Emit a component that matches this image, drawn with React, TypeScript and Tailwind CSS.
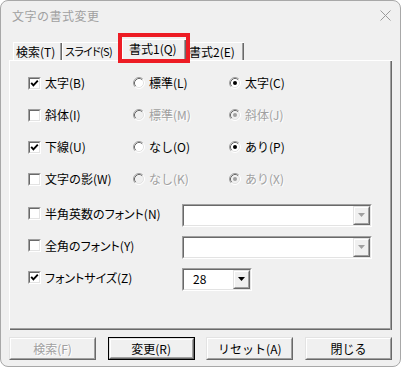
import React from "react";

const FONT = { fontFamily: '"Noto Sans CJK JP", "Noto Sans", sans-serif' };

function Raised({ children, className = "" }: { children?: React.ReactNode; className?: string }) {
  return (
    <div className={`border border-t-[#e3e3e3] border-l-[#e3e3e3] border-r-[#696969] border-b-[#696969] ${className}`}>
      <div className="w-full h-full border border-t-white border-l-white border-r-[#a0a0a0] border-b-[#a0a0a0] flex items-center justify-center">
        {children}
      </div>
    </div>
  );
}

function Sunken({ children, className = "" }: { children?: React.ReactNode; className?: string }) {
  return (
    <div className={`border border-t-[#a0a0a0] border-l-[#a0a0a0] border-r-white border-b-white ${className}`}>
      <div className="w-full h-full border border-t-[#696969] border-l-[#696969] border-r-[#e3e3e3] border-b-[#e3e3e3] bg-white flex items-center">
        {children}
      </div>
    </div>
  );
}

function Check({ checked }: { checked?: boolean }) {
  return (
    <Sunken className="w-[13px] h-[13px] shrink-0">
      {checked && (
        <svg width="9" height="9" viewBox="0 0 9 9" className="block">
          <polyline points="1.2,3.8 3.4,6.3 7.8,1.6" fill="none" stroke="#000" strokeWidth="1.9" />
        </svg>
      )}
    </Sunken>
  );
}

function Radio({ checked, disabled }: { checked?: boolean; disabled?: boolean }) {
  return (
    <svg width="12" height="12" viewBox="0 0 12 12" className="shrink-0 block">
      <circle cx="6" cy="6" r="5" fill={disabled ? "#f0f0f0" : "#fff"} />
      <path d="M2.11 9.89 A5.5 5.5 0 0 1 9.89 2.11" fill="none" stroke="#a0a0a0" strokeWidth="1" />
      <path d="M2.82 9.18 A4.5 4.5 0 0 1 9.18 2.82" fill="none" stroke="#696969" strokeWidth="1" />
      <path d="M9.89 2.11 A5.5 5.5 0 0 1 2.11 9.89" fill="none" stroke="#fff" strokeWidth="1" />
      <path d="M9.18 2.82 A4.5 4.5 0 0 1 2.82 9.18" fill="none" stroke="#e3e3e3" strokeWidth="1" />
      {checked && <circle cx="6" cy="6" r="2" fill={disabled ? "#a0a0a0" : "#000"} />}
    </svg>
  );
}

const dis = "text-[#a0a0a0] [text-shadow:1px_1px_0_#fff]";

function OptRow({
  label,
  checked,
  r1,
  r2,
  disabled,
}: {
  label: string;
  checked?: boolean;
  r1: string;
  r2: string;
  disabled?: boolean;
}) {
  return (
    <div className="h-[32px] flex items-center whitespace-nowrap">
      <div className="w-[105px] flex items-center">
        <Check checked={checked} />
        <span className="ml-[4px]">{label}</span>
      </div>
      <div className="w-[96px] flex items-center">
        <Radio disabled={disabled} />
        <span className={`ml-[4px] ${disabled ? dis : ""}`}>{r1}</span>
      </div>
      <div className="flex items-center">
        <Radio checked disabled={disabled} />
        <span className={`ml-[4px] ${disabled ? dis : ""}`}>{r2}</span>
      </div>
    </div>
  );
}

function Combo({ width, value, active }: { width: string; value?: string; active?: boolean }) {
  return (
    <Sunken className={`${width} h-[23px]`}>
      <span className="flex-1 pl-[9px] text-[12px]">{value}</span>
      <Raised className="w-[17px] h-[19px] bg-[#f0f0f0]">
        <svg width="7" height="4" viewBox="0 0 7 4" className="block">
          <polygon points="0,0 7,0 3.5,4" fill={active ? "#000" : "#a0a0a0"} />
        </svg>
      </Raised>
    </Sunken>
  );
}

function ComboRow({ label, value, active, checked, width }: { label: string; value?: string; active?: boolean; checked?: boolean; width: string }) {
  return (
    <div className="h-[32px] flex items-center whitespace-nowrap">
      <div className="w-[154px] flex items-center pb-[3px]">
        <Check checked={checked} />
        <span className="ml-[4px] [font-feature-settings:'palt']">{label}</span>
      </div>
      <Combo width={width} value={value} active={active} />
    </div>
  );
}

function Tab({ label, width, selected, tight }: { label: string; width: string; selected?: boolean; tight?: boolean }) {
  if (selected) {
    return (
      <div
        className={`${width} h-[22px] mb-[-1px] relative z-10 bg-[#f0f0f0] border-t border-l border-white flex`}
      >
        <div className="flex-1 pl-[6px] pt-[1px] leading-[16px] whitespace-nowrap">{label}</div>
        <div className="w-[1px] bg-[#a0a0a0]" />
        <div className="w-[1px] bg-[#696969]" />
      </div>
    );
  }
  return (
    <div className={`${width} h-[18px] border-t border-l border-white flex`}>
      <div
        className={`flex-1 min-w-0 pl-[2px] leading-[17px] whitespace-nowrap [font-feature-settings:'palt'] ${
          tight ? "text-[11px] tracking-[-0.7px]" : ""
        }`}
      >
        {label}
      </div>
      <div className="w-[1px] bg-[#a0a0a0]" />
      <div className="w-[1px] bg-[#696969]" />
    </div>
  );
}

function Btn({ label, def, disabled }: { label: string; def?: boolean; disabled?: boolean }) {
  const inner = (
    <Raised className="w-full h-full bg-[#f0f0f0]">
      <span className={disabled ? dis : ""}>{label}</span>
    </Raised>
  );
  if (def) {
    return <div className="w-[87px] h-[23px] border border-black">{inner}</div>;
  }
  return <div className="w-[87px] h-[23px]">{inner}</div>;
}

export default function App() {
  return (
    <div className="w-[401px] h-[367px] bg-white" style={FONT}>
      <div className="w-[401px] h-[367px] relative bg-[#f0f0f0] border border-[#a8a8a8] rounded-[8px] text-[12px] text-black overflow-hidden">
        {/* title bar */}
        <div className="h-[29px] flex items-center justify-between pl-[11px] pr-[9px]">
          <span className="text-[#a0a0a0] text-[12px] tracking-[0.5px]">文字の書式変更</span>
          <svg width="11" height="11" viewBox="0 0 11 11" className="block">
            <path d="M0.5 0.5 L10.5 10.5 M10.5 0.5 L0.5 10.5" stroke="#9a9a9a" strokeWidth="1" />
          </svg>
        </div>
        {/* tabs */}
        <div className="h-[30px] pl-[12px] flex items-end">
          <Tab label="検索(T)" width="w-[49px]" />
          <Tab label="スライド(S)" width="w-[60px]" tight />
          <Tab label="書式1(Q)" width="w-[64px]" selected />
          <Tab label="書式2(E)" width="w-[58px]" />
        </div>
        {/* panel */}
        <div className="ml-[8px] w-[383px] h-[270px] border-t border-l border-white flex">
          <div className="flex-1 flex flex-col">
            <div className="flex-1 pl-[18px] pt-[6px]">
              <OptRow label="太字(B)" checked r1="標準(L)" r2="太字(C)" />
              <OptRow label="斜体(I)" r1="標準(M)" r2="斜体(J)" disabled />
              <OptRow label="下線(U)" checked r1="なし(O)" r2="あり(P)" />
              <OptRow label="文字の影(W)" r1="なし(K)" r2="あり(X)" disabled />
              <div className="mt-[4px]">
                <ComboRow label="半角英数のフォント(N)" width="w-[190px]" />
                <ComboRow label="全角のフォント(Y)" width="w-[190px]" />
                <ComboRow label="フォントサイズ(Z)" width="w-[70px]" value="28" active checked />
              </div>
            </div>
            <div className="h-[1px] bg-[#a0a0a0]" />
            <div className="h-[1px] bg-[#696969]" />
          </div>
          <div className="w-[1px] bg-[#a0a0a0]" />
          <div className="w-[1px] bg-[#696969]" />
        </div>
        {/* buttons */}
        <div className="mt-[7px] ml-[8px] w-[383px] flex justify-between">
          <Btn label="検索(F)" disabled />
          <Btn label="変更(R)" def />
          <Btn label="リセット(A)" />
          <Btn label="閉じる" />
        </div>
        {/* red highlight */}
        <div className="absolute left-[117px] top-[32px] w-[72px] h-[30px] border-[4px] border-[#ed1c24] z-20" />
      </div>
    </div>
  );
}
